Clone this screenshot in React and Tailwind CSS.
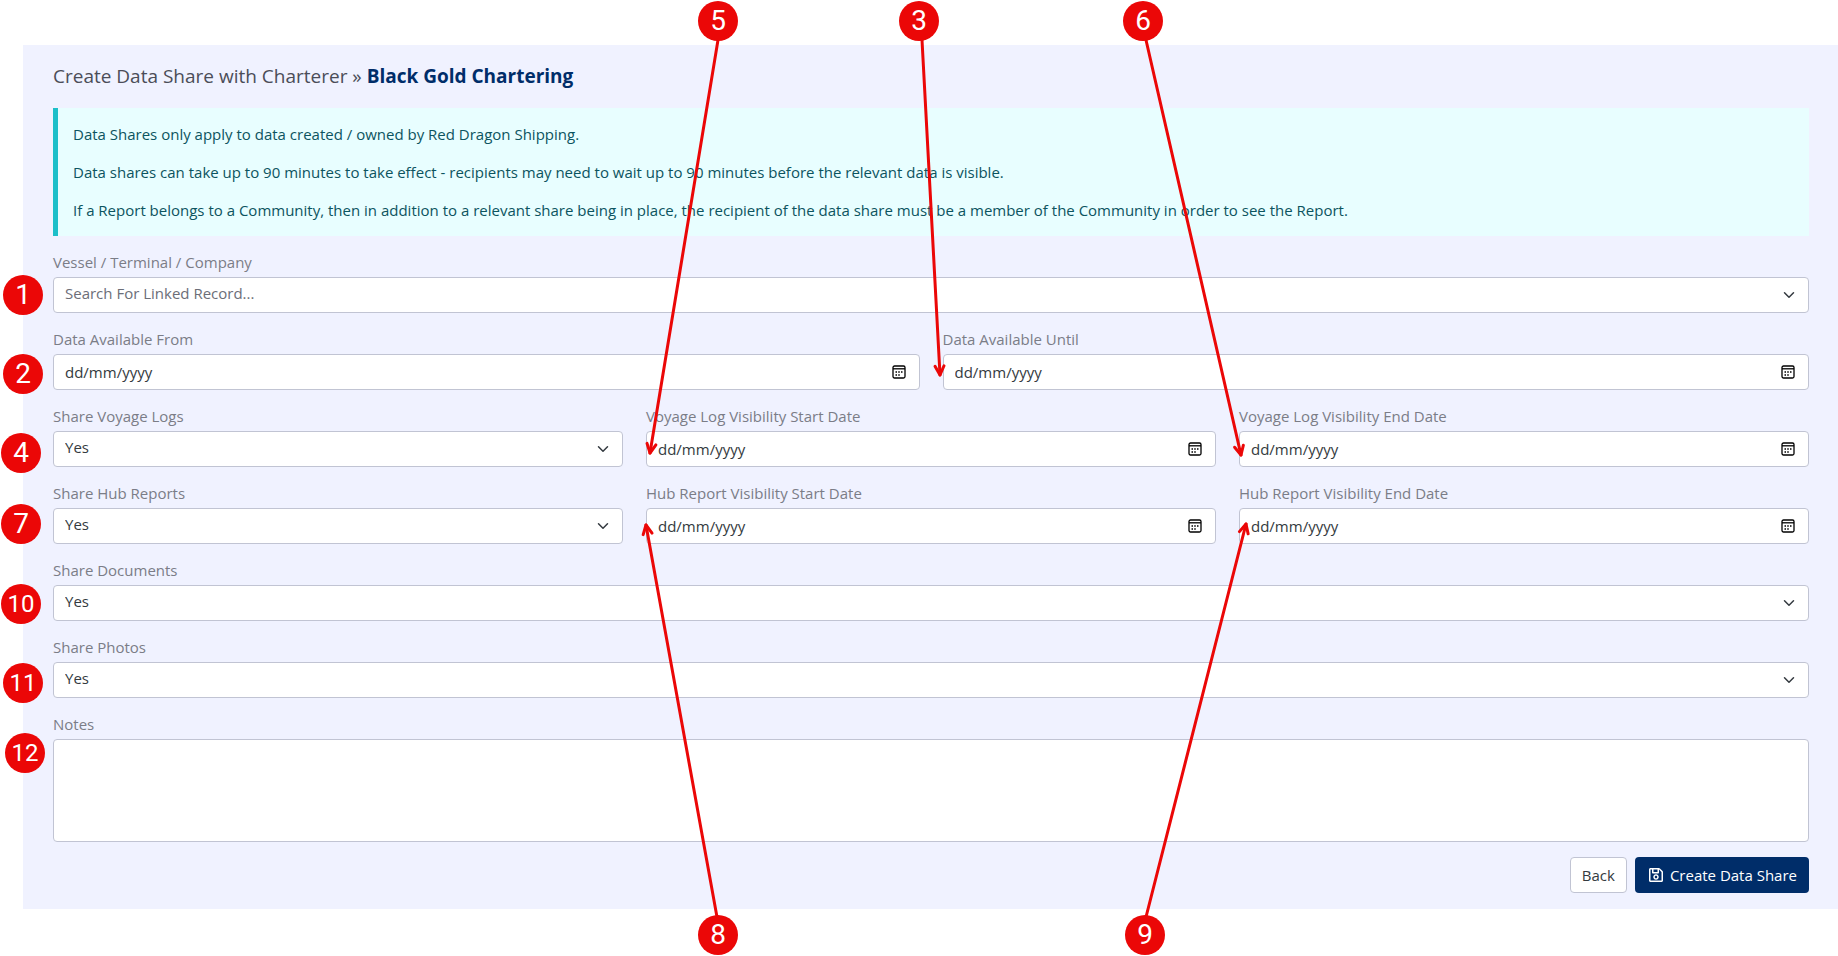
import { useState } from "react";
import { FaRegSave } from "react-icons/fa";

const calloutPins = [
  { n: 1, x: 23, y: 295 },
  { n: 2, x: 23, y: 374 },
  { n: 3, x: 919, y: 21 },
  { n: 4, x: 21, y: 453 },
  { n: 5, x: 718, y: 21 },
  { n: 6, x: 1143, y: 21 },
  { n: 7, x: 21, y: 524 },
  { n: 8, x: 718, y: 935 },
  { n: 9, x: 1145, y: 935 },
  { n: 10, x: 21, y: 604 },
  { n: 11, x: 23, y: 683 },
  { n: 12, x: 25, y: 753 },
];

// from the edge of a pin to the field it explains
const calloutArrows = [
  { from: [718, 40], to: [650, 453] },
  { from: [922, 40], to: [940, 375] },
  { from: [1146, 40], to: [1241, 455] },
  { from: [717, 917], to: [646, 525] },
  { from: [1146, 917], to: [1246, 524] },
];

const controlClass =
  "block w-full h-9 rounded border border-[#c1c4d3] bg-white px-[11px] text-[15px] leading-[22px]";

function ChevronIcon() {
  return (
    <svg
      className="pointer-events-none absolute right-[14px] top-3 size-3"
      viewBox="0 0 16 16"
      fill="none"
      stroke="#343a40"
      strokeWidth="2"
      strokeLinecap="round"
      strokeLinejoin="round"
    >
      <path d="m2 5 6 6 6-6" />
    </svg>
  );
}

function CalendarIcon() {
  return (
    <svg className="size-[14px]" viewBox="0 0 14 14" fill="none" stroke="#000">
      <rect x="1" y="1" width="12" height="12" rx="1.5" strokeWidth="1.3" />
      <path d="M1 3.8h12" strokeWidth="1.3" />
      <path
        d="M3.500 7h1.500M6.250 7h1.500M9 7h1.500M3.500 10h1.500M6.250 10h1.500"
        strokeWidth="1.600"
      />
    </svg>
  );
}

function Field({ id, label, children }) {
  return (
    <div>
      <label
        htmlFor={id}
        className="block mb-1 text-[15px] leading-[22px] text-[#7b7d87]"
      >
        {label}
      </label>
      {children}
    </div>
  );
}

function SelectField({ id, label, options, muted }) {
  return (
    <Field id={id} label={label}>
      <div className="relative">
        <select
          id={id}
          className={`${controlClass} appearance-none pb-1 ${muted ? "text-[#6c6e78]" : "text-[#343a40]"}`}
        >
          {options.map((o) => (
            <option key={o}>{o}</option>
          ))}
        </select>
        <ChevronIcon />
      </div>
    </Field>
  );
}

function DateField({ id, label }) {
  const [value, setValue] = useState("");

  return (
    <Field id={id} label={label}>
      <div className="relative">
        <input
          id={id}
          type="text"
          className={`${controlClass} text-[#343a40] placeholder:text-[#343a40]`}
          placeholder="dd/mm/yyyy"
          value={value}
          onChange={(e) => setValue(e.target.value)}
        />
        <button
          type="button"
          aria-label={`Pick ${label}`}
          className="absolute right-[14px] top-[11px]"
        >
          <CalendarIcon />
        </button>
      </div>
    </Field>
  );
}

function ArrowHead({ from, to }) {
  const angle =
    (Math.atan2(to[1] - from[1], to[0] - from[0]) * 180) / Math.PI;
  return (
    <path
      d="M-9 -4.500 0 0-9 4.500"
      transform={`translate(${to[0]} ${to[1]}) rotate(${angle})`}
    />
  );
}

function Callouts() {
  return (
    <div className="pointer-events-none absolute left-0 top-0">
      <svg
        className="absolute left-0 top-0 max-w-none"
        width="1838"
        height="956"
        fill="none"
        stroke="#eb0707"
        strokeWidth="3"
        strokeLinecap="round"
        strokeLinejoin="round"
      >
        {calloutArrows.map((a) => (
          <g key={a.from.join()}>
            <line x1={a.from[0]} y1={a.from[1]} x2={a.to[0]} y2={a.to[1]} />
            <ArrowHead from={a.from} to={a.to} />
          </g>
        ))}
      </svg>
      {calloutPins.map((p) => (
        <span
          key={p.n}
          className={`absolute flex size-10 -translate-x-1/2 -translate-y-1/2 items-center justify-center rounded-full bg-[#eb0707] font-['Roboto',sans-serif] text-white ${p.n > 9 ? "text-[24px]" : "text-[28px]"}`}
          style={{ left: p.x, top: p.y }}
        >
          {p.n}
        </span>
      ))}
    </div>
  );
}

export default function App() {
  const [notes, setNotes] = useState("");

  return (
    <div className="relative overflow-hidden bg-white pt-[45px] pl-[23px] pb-[47px] font-['Open_Sans',sans-serif]">
      <main className="bg-[#f0f2ff] pt-[15px] pr-[29px] pb-4 pl-[30px]">
        <h1 className="mb-4 text-[19px] leading-8 text-[#4b4d58]">
          Create Data Share with Charterer »{" "}
          <strong className="font-bold text-[#002d69]">
            Black Gold Chartering
          </strong>
        </h1>

        <div className="flex flex-col gap-4 border-l-[5px] border-[#1dbfc9] bg-[#e8feff] p-[15px] text-[15px] leading-[22px] text-[#0c5460]">
          <p>
            Data Shares only apply to data created / owned by Red Dragon
            Shipping.
          </p>
          <p>
            Data shares can take up to 90 minutes to take effect - recipients
            may need to wait up to 90 minutes before the relevant data is
            visible.
          </p>
          <p>
            If a Report belongs to a Community, then in addition to a relevant
            share being in place, the recipient of the data share must be a
            member of the Community in order to see the Report.
          </p>
        </div>

        <form
          className="mt-[15px] flex flex-col gap-[15px]"
          onSubmit={(e) => e.preventDefault()}
        >
          <SelectField
            id="record"
            label="Vessel / Terminal / Company"
            options={["Search For Linked Record..."]}
            muted
          />

          <div className="grid grid-cols-2 gap-[23px]">
            <DateField id="from" label="Data Available From" />
            <DateField id="until" label="Data Available Until" />
          </div>

          <div className="grid grid-cols-3 gap-[23px]">
            <SelectField
              id="voyageLogs"
              label="Share Voyage Logs"
              options={["Yes", "No"]}
            />
            <DateField id="voyageStart" label="Voyage Log Visibility Start Date" />
            <DateField id="voyageEnd" label="Voyage Log Visibility End Date" />
          </div>

          <div className="grid grid-cols-3 gap-[23px]">
            <SelectField
              id="hubReports"
              label="Share Hub Reports"
              options={["Yes", "No"]}
            />
            <DateField id="hubStart" label="Hub Report Visibility Start Date" />
            <DateField id="hubEnd" label="Hub Report Visibility End Date" />
          </div>

          <SelectField
            id="documents"
            label="Share Documents"
            options={["Yes", "No"]}
          />
          <SelectField
            id="photos"
            label="Share Photos"
            options={["Yes", "No"]}
          />

          <Field id="notes" label="Notes">
            <textarea
              id="notes"
              className="block w-full h-[103px] resize-none rounded border border-[#c1c4d3] bg-white px-[11px] py-1 text-[15px] leading-[22px] text-[#343a40]"
              value={notes}
              onChange={(e) => setNotes(e.target.value)}
            />
          </Field>

          <div className="flex justify-end gap-2 text-[15px] leading-[22px]">
            <button
              type="button"
              className="h-9 rounded border border-[#c1c4d3] bg-white px-[11px] text-[#343a40]"
            >
              Back
            </button>
            <button
              type="submit"
              className="flex h-9 items-center gap-[7px] rounded bg-[#002d69] pr-3 pl-[14px] text-white"
            >
              <FaRegSave className="h-4 w-[14px]" />
              Create Data Share
            </button>
          </div>
        </form>
      </main>

      <Callouts />
    </div>
  );
}
